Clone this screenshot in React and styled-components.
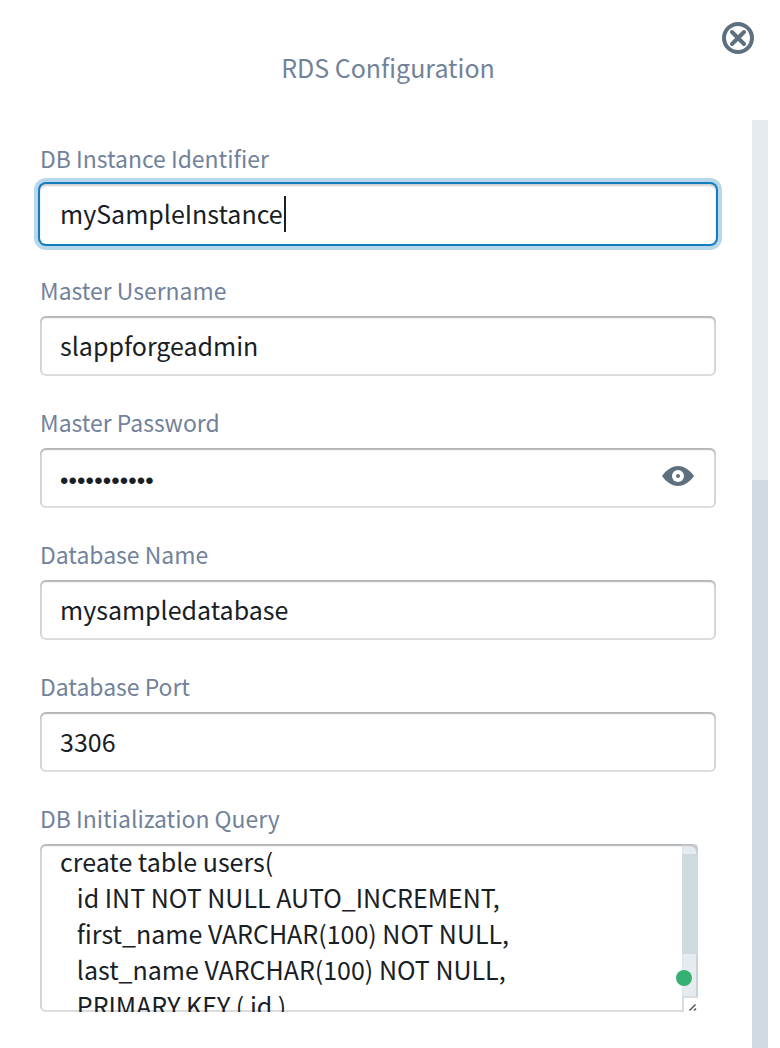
import React from 'react';
import styled, { createGlobalStyle } from 'styled-components';

const Global = createGlobalStyle`
  * { box-sizing: border-box; }
  body {
    margin: 0;
    background: #fff;
    font-family: "Noto Sans CJK SC", "Noto Sans", sans-serif;
    font-weight: 400;
    overflow: hidden;
  }
`;

const Page = styled.main`
  position: relative;
  width: 780px;
  height: 1048px;
  overflow: hidden;
  background: #fff;
`;

const Title = styled.h1`
  margin: 0;
  height: 120px;
  padding: 47px 4px 0 0;
  text-align: center;
  font-size: 25px;
  line-height: 40px;
  font-weight: inherit;
  color: #71829a;
`;

const CloseButton = styled.button`
  position: absolute;
  top: 22px;
  right: 26px;
  width: 32px;
  height: 32px;
  padding: 0;
  border: 0;
  background: none;
  svg { display: block; }
`;

const Body = styled.div`
  display: flex;
  height: 928px;
`;

const Form = styled.form`
  flex: 0 0 752px;
  padding: 20px 36px 0 40px;
`;

const Field = styled.div`
  height: 132px;
`;

const Label = styled.label`
  display: block;
  height: 44px;
  font-size: 22.94px;
  line-height: 36px;
  color: #71829a;
`;

const innerShadow = 'inset 0 0 0 2px rgba(16, 22, 26, 0.15), inset 0 2px 2px rgba(16, 22, 26, 0.2)';
const focusRing = '0 0 0 2px #137cbd, 0 0 0 6px rgba(19, 124, 189, 0.3), inset 0 2px 2px rgba(16, 22, 26, 0.2)';

const Control = styled.div`
  display: flex;
  align-items: center;
  height: 60px;
  padding: 0 20px;
  border-radius: 6px;
  background: #fff;
  box-shadow: ${(p) => (p.$focused ? focusRing : innerShadow)};
  font-size: 25px;
  color: #182026;
`;

const Value = styled.span`
  line-height: 36px;
  padding-bottom: 2px;
`;

const Dots = styled.span`
  font-family: "Liberation Sans", sans-serif;
  font-size: 24px;
  letter-spacing: 0.13px;
  line-height: 36px;
  padding-top: 5px;
`;

const Caret = styled.span`
  width: 2px;
  height: 36px;
  margin-left: 1px;
  background: #182026;
`;

const EyeButton = styled.button`
  width: 32px;
  height: 20px;
  margin: 0 2px 4px auto;
  padding: 0;
  border: 0;
  background: none;
  svg { display: block; }
`;

const QueryBox = styled.div`
  position: relative;
  width: 658px;
  height: 168px;
  overflow: hidden;
  border-radius: 6px 0 0 6px;
  box-shadow: ${innerShadow};
`;

const QueryText = styled.pre`
  margin: -1px 0 0;
  padding-left: 20px;
  font: inherit;
  font-size: 25px;
  line-height: 36px;
  color: #182026;
`;

const QueryTrack = styled.div`
  position: absolute;
  top: 0;
  right: 0;
  width: 16px;
  height: 152px;
  padding-top: 10px;
  background: #e6ebef;
  &::before {
    content: "";
    position: absolute;
    inset: 0;
    border-radius: 0 6px 0 0;
    box-shadow: inset -2px 2px 0 rgba(16, 22, 26, 0.1), inset 0 2px 2px rgba(16, 22, 26, 0.1);
  }
`;

const QueryThumb = styled.div`
  position: relative;
  height: 100px;
  background: #ced9e0;
`;

const Resizer = styled.div`
  position: absolute;
  right: 0;
  bottom: 0;
  width: 16px;
  height: 16px;
  background: #fff;
  border: solid #dbdcdd;
  border-width: 2px 0 0 2px;
  svg { display: block; }
`;

const StatusDot = styled.span`
  position: absolute;
  right: 6px;
  bottom: 26px;
  width: 16px;
  height: 16px;
  border-radius: 50%;
  background: #34b173;
`;

const ScrollTrack = styled.div`
  width: 16px;
  padding-top: 360px;
  background: #e6ebef;
`;

const ScrollThumb = styled.div`
  height: 568px;
  background: #ced9e0;
`;

const query = `create table users(
   id INT NOT NULL AUTO_INCREMENT,
   first_name VARCHAR(100) NOT NULL,
   last_name VARCHAR(100) NOT NULL,
   PRIMARY KEY ( id )`;

const fields = [
  { label: 'DB Instance Identifier', value: 'mySampleInstance', focused: true },
  { label: 'Master Username', value: 'slappforgeadmin' },
  { label: 'Master Password', value: '•••••••••••', secret: true },
  { label: 'Database Name', value: 'mysampledatabase' },
  { label: 'Database Port', value: '3306' },
];

const CloseIcon = () => (
  <svg width="32" height="32" viewBox="0 0 32 32" fill="none" stroke="#5c7080" strokeWidth="4">
    <circle cx="16" cy="16" r="14" />
    <path d="M10 10l12 12M22 10L10 22" strokeLinecap="round" />
  </svg>
);

const EyeIcon = () => (
  <svg width="32" height="20" viewBox="0 0 32 20">
    <path fill="#5c7080" d="M0 10C4 4.500 9.500 0 16 0s12 4.500 16 10c-4 5.500-9.500 10-16 10S4 15.500 0 10z" />
    <circle cx="16" cy="10" r="6" fill="#fff" />
    <circle cx="16" cy="10" r="2" fill="#5c7080" />
  </svg>
);

export default function App() {
  return (
    <Page>
      <Global />
      <Title>RDS Configuration</Title>
      <CloseButton aria-label="Close"><CloseIcon /></CloseButton>
      <Body>
        <Form>
          {fields.map((f) => (
            <Field key={f.label}>
              <Label>{f.label}</Label>
              <Control $focused={f.focused}>
                {f.secret ? <Dots>{f.value}</Dots> : <Value>{f.value}</Value>}
                {f.focused && <Caret />}
                {f.secret && <EyeButton type="button" aria-label="Show password"><EyeIcon /></EyeButton>}
              </Control>
            </Field>
          ))}
          <Label>DB Initialization Query</Label>
          <QueryBox>
            <QueryText>{query}</QueryText>
            <QueryTrack><QueryThumb /></QueryTrack>
            <Resizer>
              <svg width="14" height="14" viewBox="0 0 14 14" stroke="#555" strokeWidth="1.500">
                <path d="M5.500 12.500l6-6M10 12.500l2-2" />
              </svg>
            </Resizer>
            <StatusDot />
          </QueryBox>
        </Form>
        <ScrollTrack><ScrollThumb /></ScrollTrack>
      </Body>
    </Page>
  );
}
